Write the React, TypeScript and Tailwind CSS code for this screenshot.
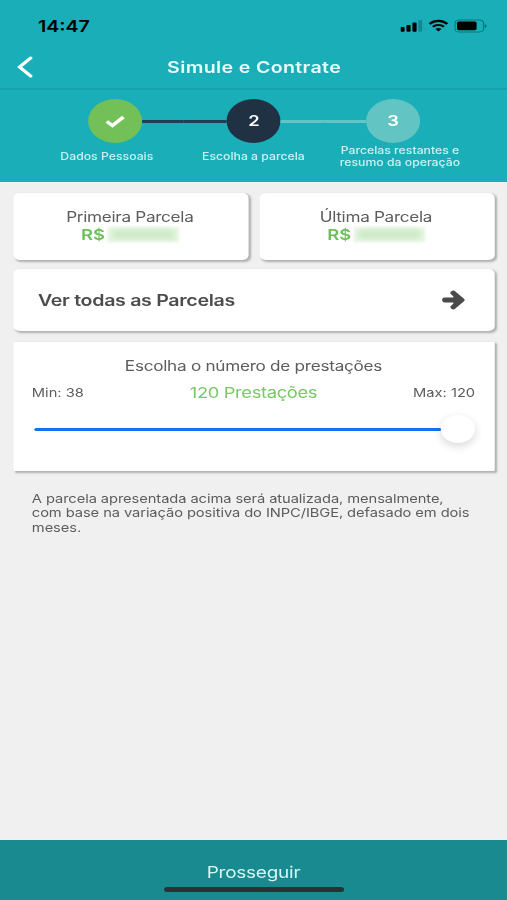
import type { ReactNode } from 'react'
import clsx from 'clsx'

const steps = [
  { id: 1, label: 'Dados Pessoais', circle: 'bg-[#72c057]' },
  { id: 2, label: 'Escolha a parcela', circle: 'bg-[#1f3143]' },
  { id: 3, label: 'Parcelas restantes e resumo da operação', circle: 'bg-[#63c5c3]' },
]

function StatusBar() {
  return (
    <div className="flex h-[45px] items-start pt-[15px] pl-[31px] pr-[16.5px] text-black">
      <span className="text-[16px] leading-[22px] font-semibold">14:47</span>
      <div className="ml-auto flex pt-[4px]">
        <svg width="18" height="13" viewBox="0 0 18 13" className="mr-[5px]">
          <rect x="0" y="8" width="3.4" height="4.8" rx="1" />
          <rect x="4.9" y="6" width="3.4" height="6.8" rx="1" />
          <rect x="9.8" y="3.4" width="3.4" height="9.4" rx="1" />
          <rect x="14.6" y="1" width="3.3" height="11.8" rx="1" opacity="0.22" />
        </svg>
        <svg width="16" height="13" viewBox="0 0 16 13" className="mr-[5px]">
          <g fill="none" stroke="currentColor" strokeWidth="2.2">
            <path d="M0.8 5C4.8 0.9 11.2 0.9 15.2 5" />
            <path d="M3.5 7.8C6 5.4 10 5.4 12.5 7.8" />
          </g>
          <path d="M8 12.6L5.5 10C6.9 8.8 9.1 8.8 10.5 10Z" />
        </svg>
        <svg width="27" height="14" viewBox="0 0 27 14">
          <rect x="0.5" y="0.9" width="23.4" height="12" rx="3.4" fill="none" stroke="black" strokeOpacity="0.35" />
          <rect x="2.2" y="2.6" width="16" height="8.6" rx="1.6" />
          <path d="M25 4.9v4.2c1.7-.8 1.7-3.4 0-4.2z" opacity="0.4" />
        </svg>
      </div>
    </div>
  )
}

function Card({ className, children }: { className?: string; children: ReactNode }) {
  return (
    <div className={clsx('bg-white shadow-[1.5px_1.5px_2px_rgba(0,0,0,0.27)]', className)}>
      {children}
    </div>
  )
}

function ParcelaCard({ title }: { title: string }) {
  return (
    <Card className="flex h-[67px] flex-1 flex-col items-center rounded-[5px] pt-[15px] pr-[1px]">
      <p className="text-[14px] leading-[18px] tracking-[-0.25px] text-[#5c5c5c]">{title}</p>
      <div className="flex items-center gap-[2px]">
        <span className="text-[15px] leading-[18px] font-semibold text-[#6cc05a]">R$</span>
        {/* value hidden */}
        <div className="flex h-[15px] w-[58px] items-center bg-[#e6f5e2] px-1 blur-[1.5px]">
          <div className="h-[9px] w-full bg-[#cdeac6] blur-[2px]" />
        </div>
      </div>
    </Card>
  )
}

export default function App() {
  return (
    <div className="h-[900px] w-[507px] overflow-hidden bg-[#f0f0f0]">
      <div className="flex h-[900px] w-[414px] origin-top-left scale-x-[1.2246] flex-col font-['Inter',sans-serif]">
        <header className="h-[182px] bg-[#1aafb8]">
          <StatusBar />
          <div className="relative flex h-[45px] items-center justify-center border-b-2 border-[#18a1aa]">
            <svg width="13" height="22" viewBox="0 0 13 22" className="absolute left-[13.5px] top-[11px]">
              <path d="M11 2L2 11L11 20" fill="none" stroke="white" strokeWidth="3" strokeLinecap="round" />
            </svg>
            <h1 className="pl-[1px] text-[16px] font-semibold tracking-[0.28px] text-[#e8fbfb]">Simule e Contrate</h1>
          </div>

          {/* Steps */}
          <div className="flex px-[36.8px] pt-[9px]">
            {steps.map((step, i) => (
              <div key={step.id} className="flex w-[113.7px] shrink-0 items-center">
                <div className={clsx('h-[3px] flex-1', i === 1 && 'bg-[#1c4152]', i === 2 && 'bg-[#63c5c3]')} />
                <div className={clsx('flex size-[44px] items-center justify-center rounded-full text-[15px] font-semibold text-white', step.circle)}>
                  {step.id === 1 ? (
                    <svg width="16" height="13" viewBox="0 0 16 13">
                      <path d="M1.2 6.4L5.8 10.6L14.8 2" fill="none" stroke="white" strokeWidth="3.2" />
                    </svg>
                  ) : (
                    <span className="pt-px">{step.id}</span>
                  )}
                </div>
                <div className={clsx('h-[3px] flex-1', i === 0 && 'bg-[#1c4152]', i === 1 && 'bg-[#63c5c3]')} />
              </div>
            ))}
          </div>
          <div className="flex h-[25px] items-center px-[27.4px]">
            {steps.map((step) => (
              <div key={step.id} className="flex w-[119.7px] shrink-0 justify-center text-center text-[10px] leading-[12px] font-medium text-[#c8f3f2]">
                <span className="max-w-[104px]">{step.label}</span>
              </div>
            ))}
          </div>
        </header>

        <main className="flex-1 px-[10.5px] pt-[10.5px]">
          <div className="flex gap-[9px]">
            <ParcelaCard title="Primeira Parcela" />
            <ParcelaCard title="Última Parcela" />
          </div>

          <Card className="mt-[9px] flex h-[62.5px] items-center justify-between rounded-[5px] pl-[20.5px] pr-[23.5px]">
            <span className="text-[16px] font-semibold tracking-[-0.25px] text-[#4c4c4c]">Ver todas as Parcelas</span>
            <svg width="19" height="20" viewBox="0 0 19 20" fill="none" stroke="#4a4a4a" strokeWidth="4.8" strokeLinecap="round" strokeLinejoin="round">
              <path d="M2.4 10H14" />
              <path d="M9.2 3L16 10L9.2 17" fill="#4a4a4a" strokeWidth="4.6" />
            </svg>
          </Card>

          <Card className="mt-[11px] h-[129px] rounded-[1px] px-[15.5px] pt-[14px]">
            <p className="text-center text-[14px] leading-[20px] tracking-[-0.22px] text-[#5c5c5c]">Escolha o número de prestações</p>
            <div className="mt-[6px] flex items-center justify-between text-[12px] leading-[22px] text-[#5c5c5c]">
              <span className="w-[56px]">Min: 38</span>
              <span className="text-[15px] tracking-[-0.3px] text-[#79c866]">120 Prestações</span>
              <span className="w-[56px] text-right">Max: 120</span>
            </div>
            <div className="mt-[11px] flex h-[28px] items-center pl-[1.5px]">
              <div className="h-[3px] flex-1 rounded-l-full bg-[#1473ec]" />
              <div className="size-[28px] rounded-full bg-white shadow-[0_3px_8px_rgba(0,0,0,0.16)]" />
            </div>
          </Card>

          <p className="mt-[21px] px-[15.5px] text-[12px] leading-[14.4px] tracking-[-0.07px] text-[#5c5c5c]">
            A parcela apresentada acima será atualizada, mensalmente,
            <br />
            com base na variação positiva do INPC/IBGE, defasado em dois
            <br />
            meses.
          </p>
        </main>

        <footer className="flex h-[60px] flex-col items-center bg-[#198a8f] pt-[22px]">
          <span className="text-[15.5px] leading-[22px] tracking-[-0.2px] text-[#d8f6f5]">Prosseguir</span>
          <div className="mt-[3px] h-[5px] w-[147px] shrink-0 rounded-full bg-[#2e2f32]" />
        </footer>
      </div>
    </div>
  )
}
